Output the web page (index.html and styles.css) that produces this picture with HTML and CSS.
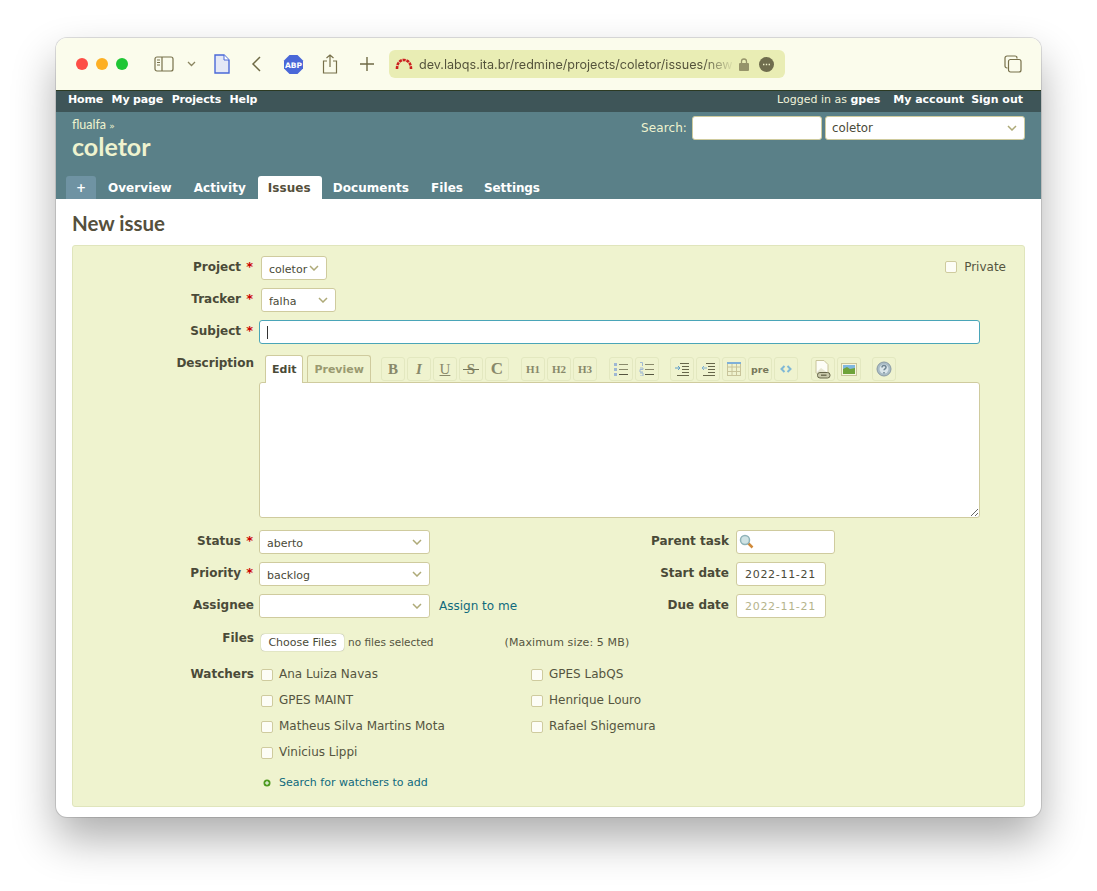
FILE: index.html
```html
<!DOCTYPE html>
<html lang="en">
<head>
    <meta charset="UTF-8">
    <title>New issue</title>
    <link rel="stylesheet" href="styles.css">
</head>
<body>
<div class="window">
    <div class="titlebar">
        <div class="lights"><i class="red"></i><i class="amber"></i><i class="green"></i></div>
        <svg class="ic-sidebar" width="21" height="16" viewBox="0 0 21 16" fill="none" stroke="#77704a" stroke-width="1.2"><rect x="1" y="1" width="18" height="14" rx="2"/><path d="M8 1v14"/><path d="M3 4h3M3 6.500h3M3 9h3" stroke-width="1"/></svg>
        <svg class="ic-chev" width="9" height="6" viewBox="0 0 9 6" fill="none" stroke="#8a8560" stroke-width="1.3"><path d="M1 1l3.500 3.500L8 1"/></svg>
        <svg class="ic-page" width="16" height="20" viewBox="0 0 16 20"><path d="M1 1h9l5 5v13H1z" fill="#e4e8f6" stroke="#4a68d8" stroke-width="1.4"/><path d="M10 1v5h5" fill="#fff" stroke="#4a68d8"/></svg>
        <svg class="ic-back" width="10" height="16" viewBox="0 0 10 16" fill="none" stroke="#6f6a45" stroke-width="1.5"><path d="M9 1L2 8l7 7"/></svg>
        <svg class="ic-abp" width="21" height="21" viewBox="0 0 21 21"><path d="M6.500 1h8L20 6.500v8L14.500 20h-8L1 14.500v-8z" fill="#4a68d8"/><text x="10.500" y="13.500" text-anchor="middle" class="abp-text">ABP</text></svg>
        <svg class="ic-share" width="16" height="20" viewBox="0 0 16 20" fill="none" stroke="#77704a" stroke-width="1.2"><path d="M5 7H1.500v12h13V7H11"/><path d="M8 13V1M4.500 4L8 1l3.500 3"/></svg>
        <svg class="ic-plus" width="14" height="14" viewBox="0 0 14 14" stroke="#6f6a45" stroke-width="1.4"><path d="M7 0v14M0 7h14"/></svg>
        <div class="urlbar">
            <svg width="18" height="12" viewBox="0 0 18 12" fill="none" stroke="#cc1f1f" stroke-width="2.600" stroke-dasharray="3 .8"><path d="M2 11C2 5 5 2 9 2s7 3 7 9"/></svg>
            <span class="url">dev.labqs.ita.br/redmine/projects/coletor/issues/new</span>
            <svg class="ic-lock" width="10" height="13" viewBox="0 0 10 13"><rect y="5" width="10" height="8" rx="1" fill="#96946a"/><path d="M2.500 5V3.500a2.500 2.500 0 015 0V5" fill="none" stroke="#96946a" stroke-width="1.3"/></svg>
            <svg class="ic-more" width="15" height="15" viewBox="0 0 15 15"><circle cx="7.500" cy="7.500" r="7.500" fill="#6f6d4e"/><path d="M4 7.500h1.400M6.800 7.500h1.400M9.600 7.500h1.400" stroke="#eef0c8" stroke-width="1.300"/></svg>
        </div>
        <svg class="ic-tabs" width="18" height="18" viewBox="0 0 18 18" fill="none" stroke="#77704a" stroke-width="1.2"><path d="M3.500 13H3a2 2 0 01-2-2V3a2 2 0 012-2h8a2 2 0 012 2v.5"/><rect x="4.500" y="4.500" width="12.500" height="12.500" rx="2"/></svg>
    </div>

    <div class="top-menu">
        <a href="#">Home</a><a href="#">My page</a><a href="#">Projects</a><a href="#">Help</a>
        <span class="loggedas">Logged in as <b>gpes</b></span>
        <a href="#" class="acct">My account</a><a href="#" class="signout">Sign out</a>
    </div>

    <div class="header">
        <div class="header-top">
            <div>
                <div class="parent">flualfa <small>»</small></div>
                <h1>coletor</h1>
            </div>
            <div class="quick-search">
                <label>Search:</label>
                <input type="text" class="q">
                <select class="jump"><option>coletor</option></select>
            </div>
        </div>
        <div class="main-menu">
            <a href="#" class="new-obj">+</a>
            <a href="#">Overview</a>
            <a href="#">Activity</a>
            <a href="#" class="selected">Issues</a>
            <a href="#">Documents</a>
            <a href="#">Files</a>
            <a href="#" class="settings">Settings</a>
        </div>
    </div>

    <div class="content">
        <h2>New issue</h2>
        <div class="box">
            <div class="row">
                <label class="lbl">Project <em>*</em></label>
                <select class="sel-project"><option>coletor</option></select>
                <label class="private"><input type="checkbox"> Private</label>
            </div>
            <div class="row">
                <label class="lbl">Tracker <em>*</em></label>
                <select class="sel-tracker"><option>falha</option></select>
            </div>
            <div class="row">
                <label class="lbl">Subject <em>*</em></label>
                <div class="subject-wrap"><input type="text" class="subject"><span class="caret"></span></div>
            </div>
            <div class="desc">
                <label class="lbl desc-lbl">Description</label>
                <div class="editor">
                    <div class="editor-bar">
                        <a class="tab on">Edit</a>
                        <a class="tab">Preview</a>
                        <div class="tools">
                            <span class="btn serif"><b>B</b></span>
                            <span class="btn serif"><b><i>I</i></b></span>
                            <span class="btn serif"><u>U</u></span>
                            <span class="btn serif"><b class="strike">S</b></span>
                            <span class="btn serif big"><b>C</b></span>
                            <span class="btn serif small gap">H1</span>
                            <span class="btn serif small">H2</span>
                            <span class="btn serif small">H3</span>
                            <span class="btn gap"><svg width="16" height="14" viewBox="0 0 16 14"><path d="M1 1h3v3H1zM1 6h3v3H1zM1 11h3v3H1z" fill="#a0b8d4"/><path d="M6 2.500h9M6 7.500h9" stroke="#8a8a6c"/><path d="M6 12.500h9" stroke="#555540"/></svg></span>
                            <span class="btn"><svg width="16" height="14" viewBox="0 0 16 14"><path d="M1 .5h2.500V4M1 6h3v1.500H1V10h3M1 11h3v3H1" fill="none" stroke="#a0b8d4"/><path d="M6 2.500h9M6 7.500h9" stroke="#8a8a6c"/><path d="M6 12.500h9" stroke="#555540"/></svg></span>
                            <span class="btn gap2"><svg width="14" height="13" viewBox="0 0 14 13"><path d="M5 .5h9M7 3.500h7M7 6.500h7M7 9.500h7M2 12.500h12" stroke="#66664a"/><path d="M0 5h4M3 3l2 2-2 2" fill="none" stroke="#5f9ec8"/></svg></span>
                            <span class="btn"><svg width="14" height="13" viewBox="0 0 14 13"><path d="M5 .5h9M7 3.500h7M7 6.500h7M7 9.500h7M2 12.500h12" stroke="#66664a"/><path d="M6 5H1M3 3L1 5l2 2" fill="none" stroke="#7fb0d0"/></svg></span>
                            <span class="btn"><svg width="14" height="14" viewBox="0 0 14 14"><rect x=".5" y=".5" width="13" height="13" fill="none" stroke="#c8c49a"/><path d="M.5 5h13M.5 9.500h13M5 1v13M9.500 1v13" stroke="#c8c49a"/><path d="M0 1h14" stroke="#7fb0d8" stroke-width="2"/></svg></span>
                            <span class="btn pre">pre</span>
                            <span class="btn"><svg width="12" height="8" viewBox="0 0 12 8" fill="none" stroke="#7fb8d6" stroke-width="2"><path d="M4.500 1L1.500 4l3 3M7.500 1l3 3-3 3"/></svg></span>
                            <span class="btn gap3"><svg width="17" height="19" viewBox="0 0 17 19"><path d="M2 .5h8l4 4V13H2z" fill="#fdfdf6" stroke="#c8c49a"/><path d="M2 13l5-5 7 5z" fill="#e6e6d0"/><rect x="3.500" y="12.500" width="12.500" height="5.500" rx="2.500" fill="#c9c9aa" stroke="#66664a"/><path d="M7 15.200h5.500" stroke="#66664a" stroke-width="1.300"/></svg></span>
                            <span class="btn"><svg width="16" height="13" viewBox="0 0 16 13"><rect x=".5" y=".5" width="15" height="12" fill="#f6f6e0" stroke="#c8c49a"/><rect x="2" y="2" width="12" height="4" fill="#7fb8e0"/><path d="M2 11V6l4-2 3 2 5-1v6z" fill="#6fa33a"/></svg></span>
                            <span class="btn gap4"><svg width="16" height="16" viewBox="0 0 16 16"><circle cx="8" cy="8" r="7" fill="#a9bcc6" stroke="#8a9aa4"/><circle cx="8" cy="8" r="4.500" fill="#dbe6ea"/><path d="M6 6.500a2 2 0 114 0c0 1.200-2 1.500-2 2.800M8 11v1.500" fill="none" stroke="#6f8592" stroke-width="1.500"/></svg></span>
                        </div>
                    </div>
                    <textarea class="body"></textarea>
                </div>
            </div>

            <div class="split">
                <div class="left">
                    <div class="row">
                        <label class="lbl">Status <em>*</em></label>
                        <select class="sel-wide"><option>aberto</option></select>
                    </div>
                    <div class="row">
                        <label class="lbl">Priority <em>*</em></label>
                        <select class="sel-wide"><option>backlog</option></select>
                    </div>
                    <div class="row">
                        <label class="lbl">Assignee</label>
                        <select class="sel-wide"><option></option></select>
                        <a href="#" class="assign">Assign to me</a>
                    </div>
                </div>
                <div class="right">
                    <div class="row">
                        <label class="lbl lbl-r">Parent task</label>
                        <div class="parent-wrap">
                            <input type="text" class="parent-task">
                            <svg class="mag" width="15" height="15" viewBox="0 0 15 15"><path d="M9 9l4.500 4.500" stroke="#d08a3a" stroke-width="2.500"/><circle cx="6" cy="6" r="4.500" fill="#cfe3e4" stroke="#8fb3b8" stroke-width="1.500"/></svg>
                        </div>
                    </div>
                    <div class="row">
                        <label class="lbl lbl-r">Start date</label>
                        <input type="text" class="date" value="2022-11-21">
                    </div>
                    <div class="row">
                        <label class="lbl lbl-r">Due date</label>
                        <input type="text" class="date empty" value="2022-11-21">
                    </div>
                </div>
            </div>

            <div class="row files">
                <label class="lbl">Files</label>
                <div class="files-ctl">
                    <button type="button" class="choose">Choose Files</button>
                    <span class="nofile">no files selected</span>
                    <span class="maxsize">(Maximum size: 5 MB)</span>
                </div>
            </div>

            <div class="watchers">
                <label class="lbl">Watchers</label>
                <div class="watch-grid">
                    <label><input type="checkbox">Ana Luiza Navas</label>
                    <label><input type="checkbox">GPES LabQS</label>
                    <label><input type="checkbox">GPES MAINT</label>
                    <label><input type="checkbox">Henrique Louro</label>
                    <label><input type="checkbox">Matheus Silva Martins Mota</label>
                    <label><input type="checkbox">Rafael Shigemura</label>
                    <label><input type="checkbox">Vinicius Lippi</label>
                </div>
            </div>
            <div class="search-watchers">
                <svg width="8" height="8" viewBox="0 0 8 8"><circle cx="4" cy="4" r="3.500" fill="#4e9a1e"/><path d="M4 2v4M2 4h4" stroke="#fff"/></svg>
                <a href="#">Search for watchers to add</a>
            </div>
        </div>
    </div>
</div>
</body>
</html>
```

FILE: styles.css
```css
* {
    box-sizing: border-box;
}
html, body {
    margin: 0;
    background: #fff;
}
body {
    padding: 38px 56px 0;
    height: 891px;
    overflow: hidden;
    font-family: "DejaVu Sans", Verdana, sans-serif;
    font-size: 11px;
    color: #55553f;
}
a {
    text-decoration: none;
}
.window {
    width: 985px;
    height: 779px;
    border-radius: 11px;
    overflow: hidden;
    background: #fff;
    box-shadow: 0 0 0 1px rgba(0, 0, 0, .12), 0 22px 44px rgba(0, 0, 0, .32);
}

/* browser chrome */
.titlebar {
    display: flex;
    align-items: center;
    height: 53px;
    padding-left: 20px;
    background: #fbfcec;
    border-bottom: 1px solid #2c3a22;
}
.lights {
    display: flex;
    gap: 8px;
}
.lights i {
    width: 12px;
    height: 12px;
    border-radius: 50%;
}
.red { background: #fd4e46; }
.amber { background: #fdb024; }
.green { background: #1fc635; }
.ic-sidebar { margin-left: 26px; }
.ic-chev { margin-left: 12px; }
.ic-page { margin-left: 18px; }
.ic-back { margin-left: 21px; }
.ic-abp { margin-left: 22px; }
.ic-share { margin-left: 18px; }
.ic-plus { margin-left: 22px; }
.ic-tabs { margin-left: auto; margin-right: 19px; }
.abp-text {
    font: bold 7.500px "DejaVu Sans", sans-serif;
    fill: #fff;
}
.urlbar {
    display: flex;
    align-items: center;
    width: 396px;
    height: 28px;
    margin-left: 15px;
    padding-left: 6px;
    border-radius: 6px;
    background: #e9edb4;
}
.url {
    width: 316px;
    margin-left: 6px;
    overflow: hidden;
    white-space: nowrap;
    font-family: "Inter", sans-serif;
    font-size: 12.600px;
    color: #55543c;
    -webkit-mask-image: linear-gradient(to right, #000 90%, transparent);
    mask-image: linear-gradient(to right, #000 90%, transparent);
}
.ic-lock { margin-left: 4px; }
.ic-more { margin-left: 10px; }

/* redmine header */
.top-menu {
    display: flex;
    align-items: center;
    height: 21px;
    padding: 0 18px 4px 12px;
    background: #3e5558;
    color: #f1f3da;
}
.top-menu a {
    margin-right: 8.500px;
    font-weight: bold;
    letter-spacing: -.15px;
    color: #fff;
}
.loggedas {
    margin-left: auto;
    margin-right: 13px;
}
.loggedas b {
    color: #fff;
}
.top-menu .acct {
    margin-right: 7px;
    letter-spacing: 0;
}
.top-menu .signout {
    margin-right: 0;
    letter-spacing: 0;
}
.header {
    height: 87px;
    padding: 0 16px;
    background: #5a8088;
    color: #eff3cf;
}
.header-top {
    display: flex;
    justify-content: space-between;
    height: 64px;
}
.parent {
    padding-top: 6px;
    font-family: Lato, sans-serif;
    font-size: 12.500px;
    line-height: 14px;
}
.parent small {
    font-family: "DejaVu Sans", sans-serif;
    font-size: 9px;
    line-height: 0;
}
h1 {
    margin: 0;
    font-family: Lato, sans-serif;
    font-size: 25px;
    line-height: 28px;
    font-weight: bold;
}
.quick-search {
    display: flex;
    align-items: flex-start;
    padding-top: 4px;
    font-size: 12px;
}
.quick-search label {
    margin-right: 5px;
    line-height: 24px;
    letter-spacing: .1px;
}
.q {
    width: 130px;
    height: 24px;
    margin-right: 3px;
}
.jump {
    width: 200px;
    height: 24px;
    padding: 0 6px;
    font-size: 11.800px;
}
.main-menu {
    display: flex;
    height: 23px;
    margin-left: -6px;
    font-size: 12px;
    line-height: 25px;
    font-weight: bold;
    letter-spacing: .05px;
}
.main-menu a {
    padding: 0 11px;
    color: #fff;
}
.main-menu .new-obj {
    width: 30px;
    margin-right: 1px;
    padding: 0;
    text-align: center;
    border-radius: 3px 3px 0 0;
    background: #6f93a3;
}
.main-menu .selected {
    margin-left: 1px;
    padding-left: 10px;
    border-radius: 3px 3px 0 0;
    background: #fff;
    color: #55503c;
}
.main-menu .settings {
    margin-left: -1px;
    letter-spacing: -.1px;
}

/* form controls */
input, select, textarea {
    border: 1px solid #cfcb9e;
    border-radius: 3px;
    background-color: #fff;
    margin: 0;
    outline: none;
}
select {
    appearance: none;
    height: 24px;
    padding: 2px 7px 0;
    font-family: inherit;
    font-size: 11px;
    color: #4a4a38;
    background-image: url("data:image/svg+xml,%3Csvg xmlns='http://www.w3.org/2000/svg' width='10' height='6' viewBox='0 0 10 6' fill='none' stroke='%23aeaa78' stroke-width='1.500'%3E%3Cpath d='M1 1l4 4 4-4'/%3E%3C/svg%3E");
    background-repeat: no-repeat;
    background-position: right 7px center;
}
input[type=checkbox] {
    appearance: none;
    width: 12px;
    height: 12px;
    border-radius: 2px;
    background: #fdfdf6;
}

.content {
    padding: 13px 16px 0;
}
h2 {
    margin: 0 0 11px;
    font-family: Lato, sans-serif;
    font-size: 20.500px;
    line-height: 22px;
    font-weight: bold;
    color: #55503c;
}
.box {
    height: 562px;
    padding-top: 6px;
    border: 1px solid #e0e5bc;
    border-radius: 3px;
    background: #eff3cf;
}
.row {
    display: flex;
    align-items: center;
    height: 32px;
}
.lbl {
    flex: none;
    width: 181px;
    margin-right: 5px;
    padding-bottom: 2px;
    text-align: right;
    font-size: 12px;
    font-weight: bold;
    color: #4a4a38;
}
.lbl em {
    margin: 0 1px 0 1px;
    font-size: 13px;
    line-height: 0;
    font-style: normal;
    color: #c00;
}
.sel-project {
    width: 66px;
    margin-left: 2px;
}
.sel-tracker {
    width: 75px;
    margin-left: 2px;
}
.private {
    display: flex;
    align-items: center;
    gap: 7px;
    margin-left: auto;
    margin-right: 18px;
    padding-bottom: 2px;
    font-size: 12px;
}
.subject-wrap {
    position: relative;
}
.subject {
    display: block;
    width: 721px;
    height: 24px;
    border-color: #4aa5b8;
}
.caret {
    position: absolute;
    left: 8px;
    top: 6px;
    width: 1px;
    height: 13px;
    background: #333;
}
.desc {
    display: flex;
}
.desc-lbl {
    padding-bottom: 0;
    line-height: 30px;
}
.editor-bar {
    display: flex;
    align-items: flex-end;
    height: 34px;
    padding-left: 6px;
}
.tab {
    height: 28px;
    margin-right: 4px;
    padding: 0 6px;
    margin-bottom: -1px;
    border: 1px solid #cfcb9e;
    border-bottom: 0;
    border-radius: 3px 3px 0 0;
    font-size: 11px;
    line-height: 28px;
    font-weight: bold;
    color: #9a9a70;
}
.tab.on {
    position: relative;
    background: #fff;
    color: #4a4a38;
}
.tools {
    display: flex;
    gap: 2px;
    margin-left: 6px;
    margin-bottom: 1px;
}
.btn {
    display: flex;
    align-items: center;
    justify-content: center;
    width: 24px;
    height: 24px;
    border: 1px solid #e3e8c0;
    border-radius: 3px;
    color: #88886a;
    font-size: 13px;
}
.serif {
    font-family: "Liberation Serif", serif;
    font-size: 15px;
}
.big {
    font-size: 17px;
}
.small {
    font-size: 11px;
    font-weight: bold;
}
.strike {
    position: relative;
}
.strike::after {
    content: "";
    position: absolute;
    left: -4px;
    right: -4px;
    top: 8px;
    height: 1px;
    background: #77775a;
}
.pre {
    font-size: 9.500px;
    font-weight: bold;
    color: #77775a;
}
.gap { margin-left: 10px; }
.gap2 { margin-left: 9px; }
.gap3 { margin-left: 11px; }
.gap4 { margin-left: 9px; }
.body {
    display: block;
    width: 721px;
    height: 136px;
    resize: both;
}
.split {
    display: flex;
    margin-top: 8px;
}
.left {
    width: 473px;
}
.assign {
    margin-left: 9px;
    font-size: 12px;
    color: #0f6a7d;
}
.sel-wide {
    width: 171px;
}
.lbl-r {
    width: 183px;
    margin-right: 7px;
}
.parent-wrap {
    position: relative;
}
.parent-task {
    display: block;
    width: 99px;
    height: 24px;
}
.mag {
    position: absolute;
    left: 3px;
    top: 4px;
}
.date {
    width: 90px;
    height: 24px;
    padding: 0 8px;
    font-family: inherit;
    font-size: 11px;
    letter-spacing: .7px;
    color: #4a4a38;
}
.date.empty {
    color: #b5b48c;
}
.files {
    margin-top: -1px;
}
.files .lbl {
    padding: 2px 0 0;
}
.files-ctl {
    display: flex;
    align-items: center;
    margin-top: 10px;
    margin-left: 2px;
}
.choose {
    width: 83px;
    height: 17px;
    padding: 0;
    border: 0;
    border-radius: 4px;
    background: #fff;
    box-shadow: 0 0 1px rgba(0, 0, 0, .5);
    font-family: inherit;
    font-size: 11px;
    color: #4a4a38;
}
.nofile {
    margin-left: 4px;
    font-size: 10.500px;
}
.maxsize {
    margin-left: 71px;
    letter-spacing: .12px;
}
.watchers {
    display: flex;
    margin-top: 8px;
}
.watchers .lbl {
    padding-bottom: 0;
    line-height: 26px;
}
.watch-grid {
    display: grid;
    grid-template-columns: 270px 270px;
    grid-auto-rows: 26px;
    margin-left: 2px;
    font-size: 12px;
}
.watch-grid label {
    display: flex;
    align-items: center;
}
.watch-grid input {
    margin-top: 2px;
    margin-right: 6px;
}
.search-watchers {
    display: flex;
    align-items: center;
    gap: 8px;
    margin: 5px 0 0 190px;
    line-height: 26px;
}
.search-watchers a {
    color: #0f6a7d;
}
```
